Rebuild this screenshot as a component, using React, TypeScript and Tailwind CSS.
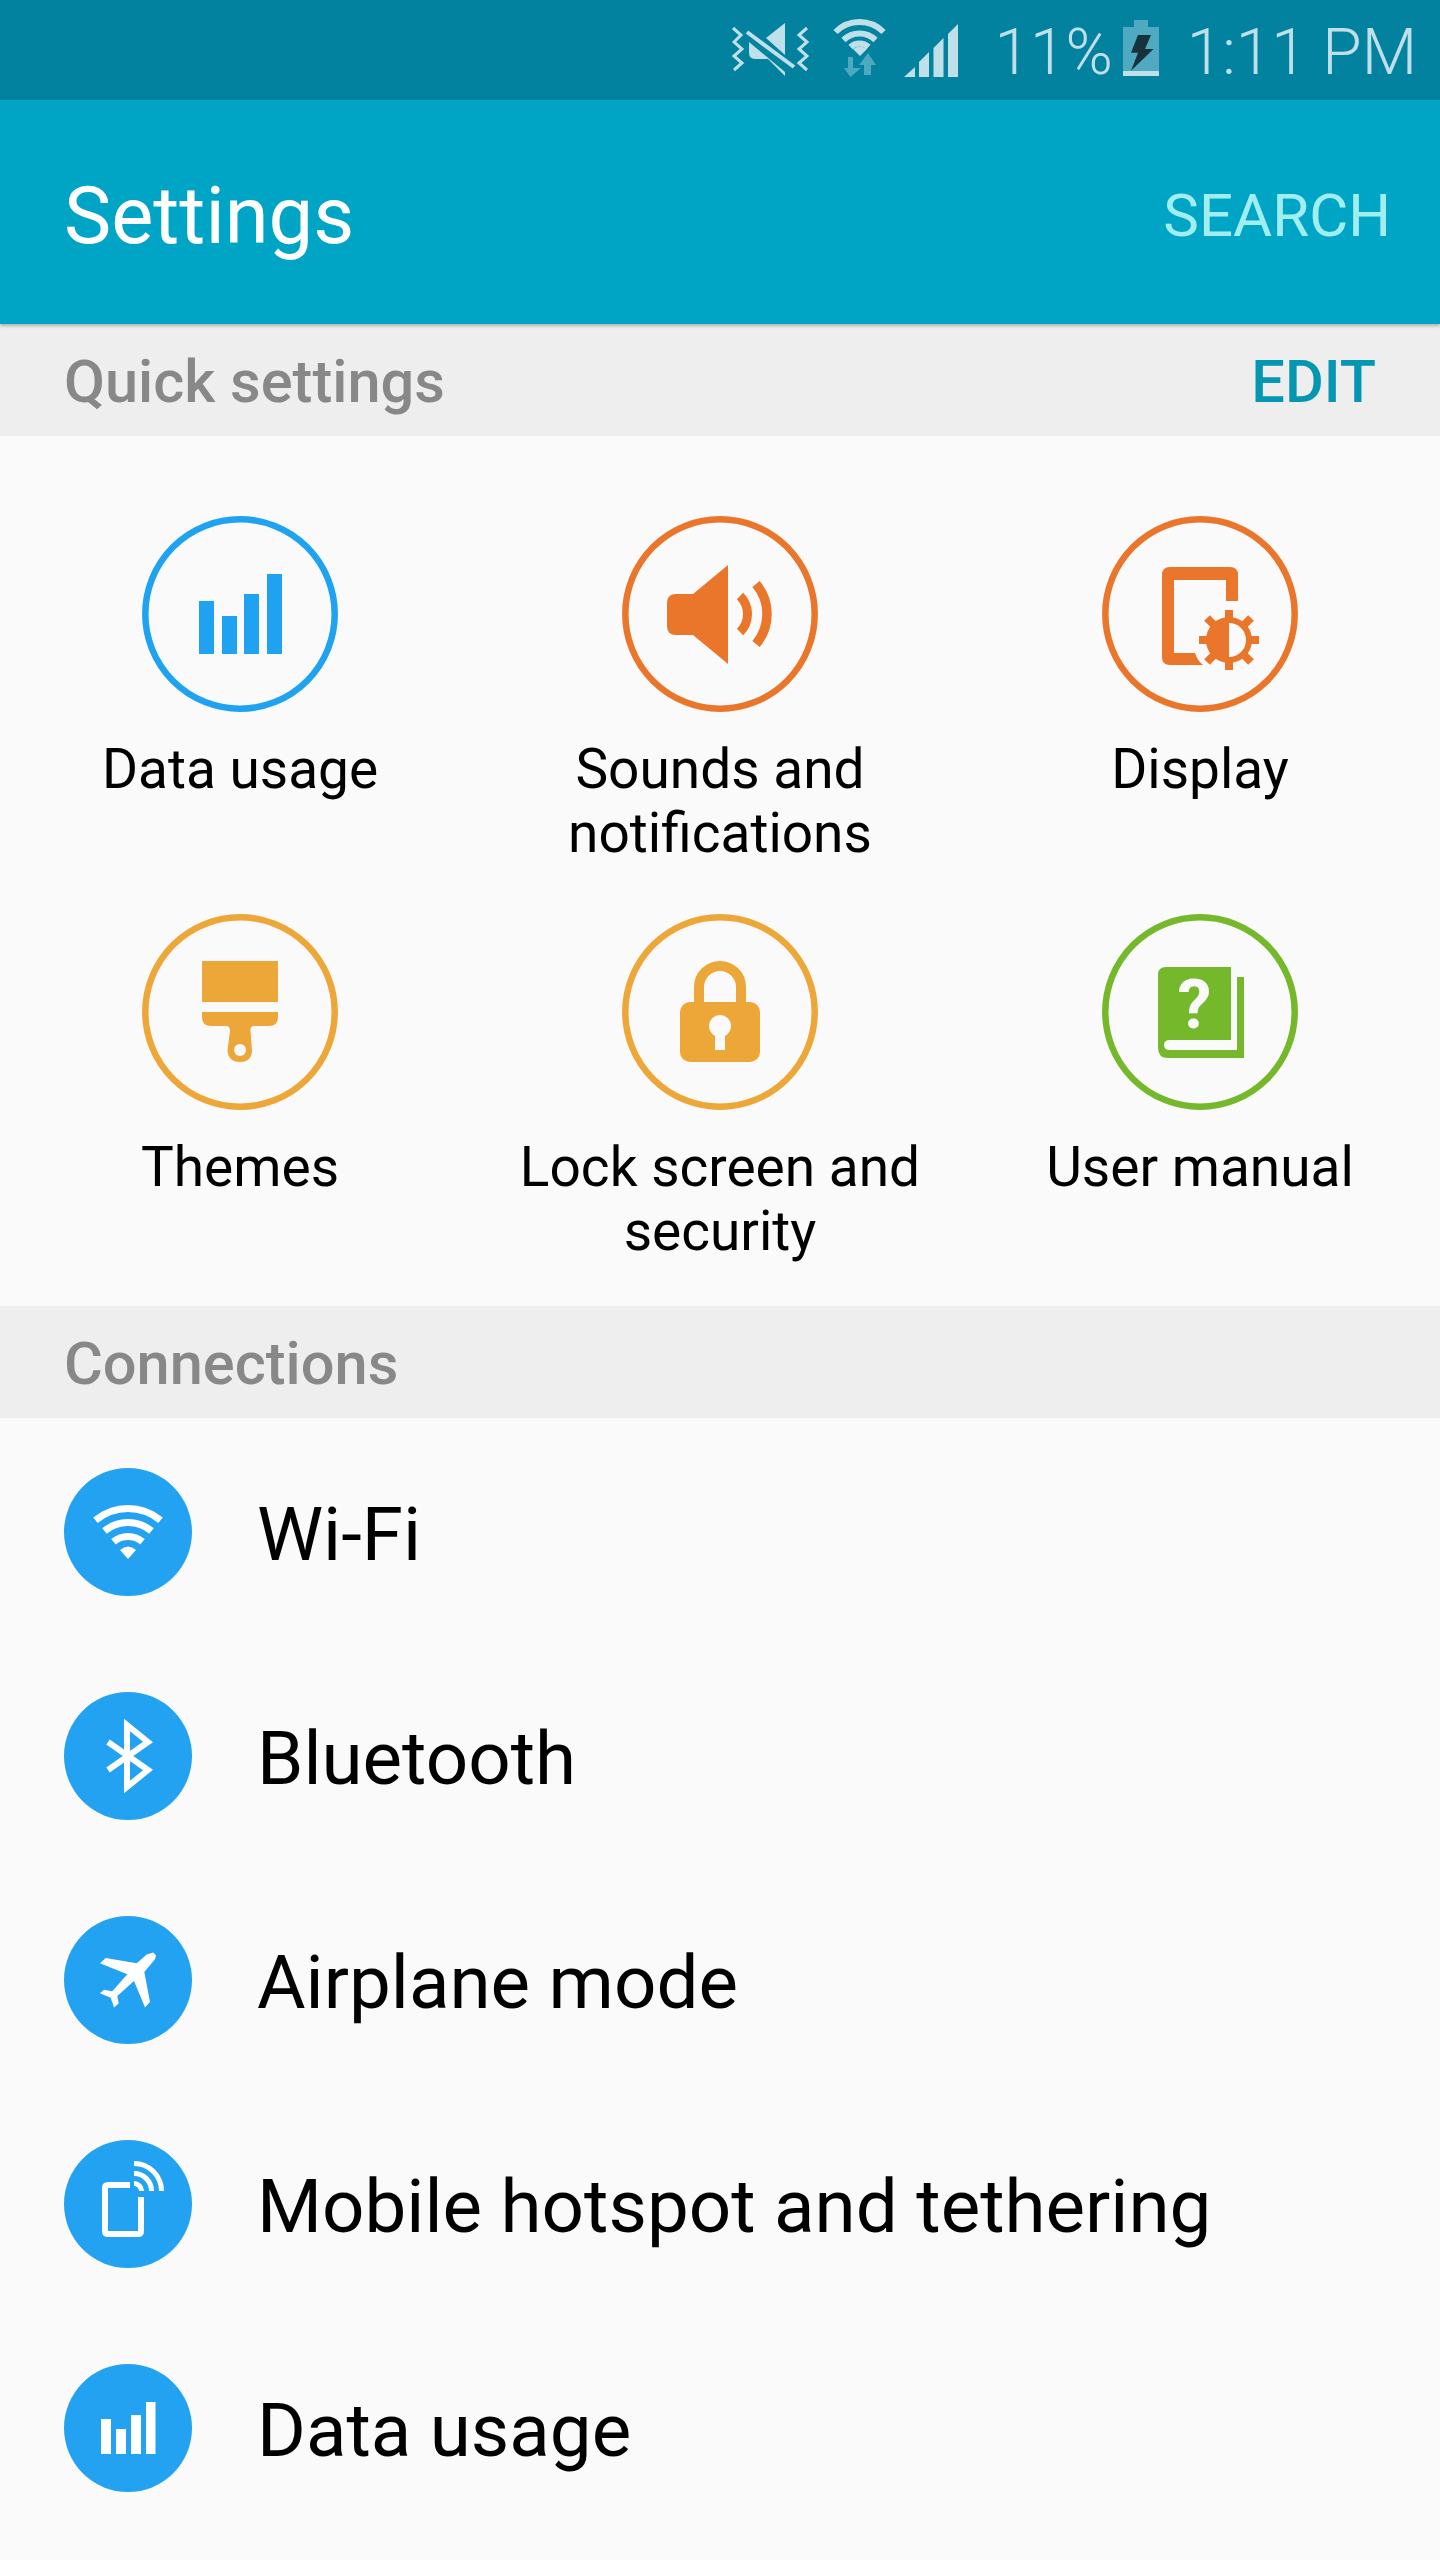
import type { ReactNode } from "react"

const LIGHT = "#bfe0e8"

function MuteIcon() {
  return (
    <svg width="78" height="58" viewBox="0 0 78 58" fill={LIGHT}>
      <path d="M53 3V35L34 18Z" />
      <path d="M17 22L53 52V56L36 39H24Q17 39 17 33Z" />
      <path d="M15 12L62 47" stroke={LIGHT} strokeWidth="4" />
      <path d="M1 8L9 15L2 22L10 29L2 36L10 43L2 50" fill="none" stroke={LIGHT} strokeWidth="3" />
      <path d="M75 8L67 15L75 22L67 29L75 36L67 43L75 50" fill="none" stroke={LIGHT} strokeWidth="3" />
    </svg>
  )
}

function StatusWifi() {
  return (
    <svg width="57" height="60" viewBox="0 0 57 60" fill="none">
      <g stroke={LIGHT} strokeWidth="6">
        <path d="M4.5 13A34 34 0 0 1 52.5 13" />
        <path d="M12.5 21A23 23 0 0 1 44.5 21" />
        <path d="M19.5 28A13 13 0 0 1 37.5 28" />
      </g>
      <path d="M29 37L22 30Q29 25 36 30Z" fill={LIGHT} />
      <path d="M18 38H23V49H31L20.500 58L14 49H18Z" fill="#4da9bf" transform="translate(-1 0)" />
      <path d="M33 46H28L37 34L45 46H40V56H33Z" fill="#4da9bf" />
    </svg>
  )
}

function SignalIcon() {
  return (
    <svg width="54" height="53" viewBox="0 0 54 53" fill={LIGHT}>
      <path d="M0 53L11 43V53Z" />
      <path d="M15 53V38L25 28V53Z" />
      <path d="M29.500 53V24L39.500 14V53Z" />
      <path d="M44 53V10L54 0V53Z" />
    </svg>
  )
}

function BatteryIcon() {
  return (
    <svg width="36" height="56" viewBox="0 0 36 56">
      <path d="M11 0H25V7H36V56H0V7H11Z" fill="#4fa9c0" />
      <path d="M0 51H36V56H0Z" fill={LIGHT} />
      <path d="M15 15H28L22 29H30.500L8 50.700L15 32.700H8Z" fill="#16333c" />
    </svg>
  )
}

function QuickCircle({ color, children }: { color: string; children: ReactNode }) {
  return (
    <svg width="196" height="196" viewBox="0 0 196 196" fill={color}>
      <circle cx="98" cy="98" r="94.700" fill="none" stroke={color} strokeWidth="6.500" />
      {children}
    </svg>
  )
}

function ListCircle({ children }: { children: ReactNode }) {
  return (
    <svg width="128" height="128" viewBox="0 0 128 128" className="shrink-0">
      <circle cx="64" cy="64" r="64" fill="#22a2f0" />
      {children}
    </svg>
  )
}

const quickItems: { label: string[]; icon: ReactNode }[] = [
  {
    label: ["Data usage"],
    icon: (
      <QuickCircle color="#1fa3f0">
        <rect x="57" y="85" width="15" height="53" />
        <rect x="80" y="100" width="15" height="38" />
        <rect x="102" y="78" width="15" height="60" />
        <rect x="125" y="58" width="15" height="80" />
      </QuickCircle>
    ),
  },
  {
    label: ["Sounds and", "notifications"],
    icon: (
      <QuickCircle color="#ea762b">
        <path d="M106 49V148L71 119H54Q45 119 45 110V87Q45 78 54 78H71Z" />
        <path d="M118 80A25.300 25.300 0 0 1 118 116" fill="none" stroke="#ea762b" strokeWidth="9" />
        <path d="M134 68A46.400 46.400 0 0 1 134 128" fill="none" stroke="#ea762b" strokeWidth="9.500" />
      </QuickCircle>
    ),
  },
  {
    label: ["Display"],
    icon: (
      <QuickCircle color="#ea762b">
        <path d="M136 85H124V64H72V137H93Q95 144 101 149H68Q60 149 60 141V59Q60 51 68 51H128Q136 51 136 59Z" />
        <path d="M127 94V154M97 124H157M105 102L149 146M149 102L105 146" stroke="#ea762b" strokeWidth="8" />
        <circle cx="127" cy="124" r="20" fill="#fafafa" stroke="#ea762b" strokeWidth="6" />
        <path d="M127 104A20 20 0 0 0 127 144Z" />
      </QuickCircle>
    ),
  },
  {
    label: ["Themes"],
    icon: (
      <QuickCircle color="#eda738">
        <rect x="60" y="47" width="76" height="41" />
        <path d="M60 98H136V103Q136 112 127 112H112Q108 112 108.500 117L110 136Q110 148 98 148Q86 148 85.500 136L88 117Q88 112 84 112H69Q60 112 60 103Z" />
        <ellipse cx="98" cy="136" rx="6" ry="6" fill="#fafafa" />
      </QuickCircle>
    ),
  },
  {
    label: ["Lock screen and", "security"],
    icon: (
      <QuickCircle color="#eda738">
        <path d="M77 90V73A21 21 0 0 1 119 73V90" fill="none" stroke="#eda738" strokeWidth="10" />
        <rect x="58" y="88" width="80" height="60" rx="10" />
        <circle cx="98" cy="112" r="11" fill="#fafafa" />
        <rect x="93" y="112" width="10" height="24" fill="#fafafa" />
      </QuickCircle>
    ),
  },
  {
    label: ["User manual"],
    icon: (
      <QuickCircle color="#75b82b">
        <path d="M64 53H129V126H68Q62 126 62 131Q62 136 68 136H135V63H142V144H66Q56 144 56 134V61Q56 53 64 53Z" />
        <text x="92.500" y="114" textAnchor="middle" fontSize="68" fontWeight="700" fill="#fafafa" fontFamily="Roboto, sans-serif">
          ?
        </text>
      </QuickCircle>
    ),
  },
]

const listItems: { label: string; icon: ReactNode }[] = [
  {
    label: "Wi-Fi",
    icon: (
      <ListCircle>
        <g fill="none" stroke="#fff" strokeWidth="7">
          <path d="M31.500 52.300A50.500 50.500 0 0 1 96.500 52.300" />
          <path d="M40.500 63A36.500 36.500 0 0 1 87.500 63" />
          <path d="M49.500 73.800A22.500 22.500 0 0 1 78.500 73.800" />
        </g>
        <path d="M64 91L56 82Q64 75 72 82Z" fill="#fff" />
      </ListCircle>
    ),
  },
  {
    label: "Bluetooth",
    icon: (
      <ListCircle>
        <path d="M44 50L84 78L63 95V33L84 50L44 78" fill="none" stroke="#fff" strokeWidth="6" />
      </ListCircle>
    ),
  },
  {
    label: "Airplane mode",
    icon: (
      <ListCircle>
        <path
          d="M89.300 36.600L92 39.400L91 43.300L80.300 56L86 86L81 91.600L70 65L53.300 80L54.700 87.600L50 91.600L46.700 81.700L36 77.300L40 73.800L48.300 75.300L63.300 58.300L36 47.300L41.700 42L72.700 47.300L82.700 38.600Z"
          fill="#fff"
        />
      </ListCircle>
    ),
  },
  {
    label: "Mobile hotspot and tethering",
    icon: (
      <ListCircle>
        <g fill="none" stroke="#fff">
          <path d="M66 45H44Q41 45 41 48V91Q41 94 44 94H74Q77 94 77 91V57" strokeWidth="6" />
          <path d="M70 23.500A27.500 27.500 0 0 1 97.500 51" strokeWidth="5" />
          <path d="M70 33.500A17.500 17.500 0 0 1 87.500 51" strokeWidth="5" />
          <path d="M70 43.500A7.500 7.500 0 0 1 77.500 51" strokeWidth="5" />
        </g>
      </ListCircle>
    ),
  },
  {
    label: "Data usage",
    icon: (
      <ListCircle>
        <g fill="#fff">
          <rect x="37" y="55" width="10" height="35" />
          <rect x="52" y="65" width="10" height="25" />
          <rect x="67" y="51" width="10" height="39" />
          <rect x="82" y="38" width="9.500" height="52" />
        </g>
      </ListCircle>
    ),
  },
]

function SectionHeader({ title, action }: { title: string; action?: string }) {
  return (
    <div className="flex h-[112px] items-center justify-between bg-[#eeeeee] pl-[64px] pr-[64px] pt-[5px] text-[59.500px] font-medium">
      <span className="text-[#888888]">{title}</span>
      {action && <span className="text-[#0596b2]">{action}</span>}
    </div>
  )
}

export default function App() {
  return (
    <div className="h-[2560px] w-[1440px] overflow-hidden bg-[#fafafa] font-['Roboto',sans-serif] text-black">
      {/* Status bar */}
      <div className="flex h-[100px] items-center justify-end bg-[#02829f] pr-[23px] font-light text-[#bfe0e8]">
        <div className="-mt-[2px]"><MuteIcon /></div>
        <div className="-mt-[2px] ml-[21px]"><StatusWifi /></div>
        <div className="ml-[16px]"><SignalIcon /></div>
        <span className="ml-[36px] mt-[6px] text-[64px] leading-none">11%</span>
        <div className="-mt-[4px] ml-[10px]"><BatteryIcon /></div>
        <span className="ml-[28px] mt-[6px] text-[64px] leading-none">1:11 PM</span>
      </div>

      {/* App bar */}
      <div className="relative z-10 flex h-[224px] items-center justify-between bg-[#00a5c5] pl-[64px] pr-[49px] pt-[8px] shadow-[0_2px_3px_rgba(0,0,0,0.25)]">
        <span className="text-[79.500px] text-white">Settings</span>
        <span className="text-[60px] text-[#a0eef0]">SEARCH</span>
      </div>

      <SectionHeader title="Quick settings" action="EDIT" />

      {/* Quick settings grid */}
      <div className="grid h-[870px] grid-cols-3 grid-rows-[398px_auto] pt-[80px]">
        {quickItems.map((item) => (
          <div key={item.label[0]} className="flex flex-col items-center">
            {item.icon}
            <div className="mt-[25px] text-center text-[55px] leading-[64px]">
              {item.label.map((line) => (
                <div key={line}>{line}</div>
              ))}
            </div>
          </div>
        ))}
      </div>

      <SectionHeader title="Connections" />

      {/* Connections list */}
      <div className="pt-[2px]">
        {listItems.map((item) => (
          <div key={item.label} className="flex h-[224px] items-center gap-[65px] pl-[64px]">
            {item.icon}
            <span className="pt-[6px] text-[74.500px]">{item.label}</span>
          </div>
        ))}
      </div>
    </div>
  )
}
